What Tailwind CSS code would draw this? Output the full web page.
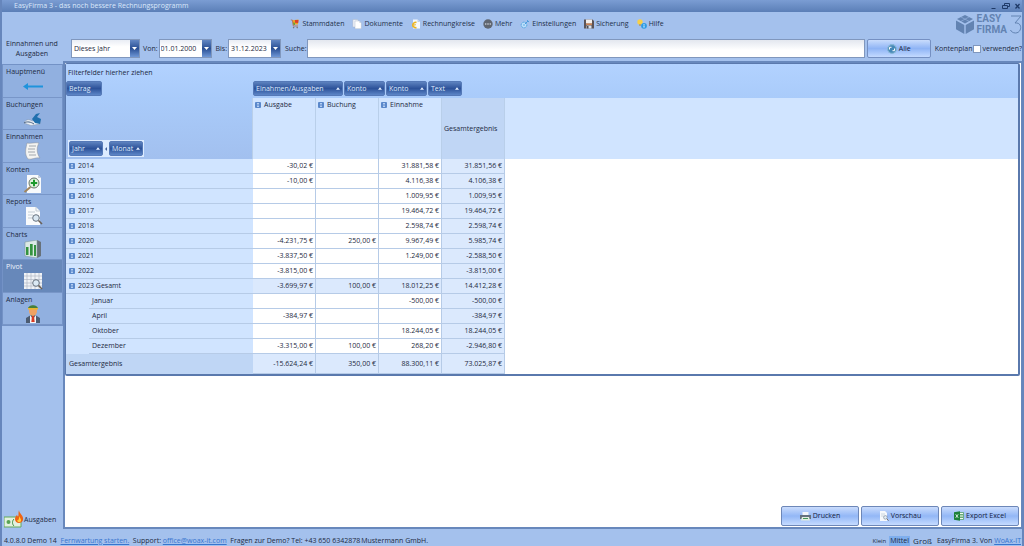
<!DOCTYPE html>
<html lang="de">
<head>
<meta charset="utf-8">
<title>EasyFirma 3 - das noch bessere Rechnungsprogramm</title>
<script src="https://cdn.jsdelivr.net/npm/@tailwindcss/browser@4"></script>
</head>
<body class="flex min-h-screen flex-col overflow-x-hidden border-x-2 border-[#6686bc] bg-[#a4c1ed] font-['Open_Sans','Noto_Sans',sans-serif] text-[7px] leading-[10px] text-[#1d2a42]">
<svg class="hidden">
  <symbol id="exp" viewBox="0 0 6 6"><rect width="6" height="6" rx="1" fill="#5a88cb"/><path d="M2 1.500h2M2 4.500h2M3 1.500v3" stroke="#c5daf8" stroke-width=".8"/></symbol>
  <symbol id="up" viewBox="0 0 5 3"><path d="M0 3 2.500 0 5 3z" fill="#e4efff"/></symbol>
  <symbol id="down" viewBox="0 0 5 3"><path d="M0 0h5L2.500 3z" fill="#fff"/></symbol>
  <symbol id="lens" viewBox="0 0 10 10"><circle cx="4" cy="4" r="3" fill="#dcebf5" fill-opacity=".8" stroke="#77828e"/><path d="m6.300 6.300 3 3" stroke="#6f6558" stroke-width="1.500"/></symbol>
</svg>

<header>
  <div class="flex h-3 items-center justify-between bg-linear-to-b from-[#7b9dd3] to-[#5b7fb7] pl-3 text-[#dbe8fb]">
    <h1 class="-mt-px">EasyFirma 3 - das noch bessere Rechnungsprogramm</h1>
    <div class="flex items-center gap-1 text-[#1f3a68]">
      <button aria-label="Minimieren" class="h-2 w-2"><svg viewBox="0 0 8 8" class="size-2"><path d="M1.500 6.500h4" stroke="currentColor"/></svg></button>
      <button aria-label="Wiederherstellen" class="h-2 w-2"><svg viewBox="0 0 8 8" class="size-2"><path d="M2.500 3V1.500h5v3H6M.5 3.500h5v3h-5z" fill="none" stroke="currentColor"/></svg></button>
      <button aria-label="Schließen" class="h-2 w-2"><svg viewBox="0 0 8 8" class="size-2"><path d="m1.500 2 4 4.500m0-4.500-4 4.500" stroke="currentColor" stroke-width="1.300"/></svg></button>
    </div>
  </div>

  <div class="flex h-6 items-center">
    <nav class="flex flex-1 items-center justify-center gap-2 text-[#22304a] [&_button]:flex [&_button]:items-center [&_button]:gap-[2px] [&_svg]:size-[10px]">
      <button><svg viewBox="0 0 10 10"><path d="M2.500 1.200 8.500.5 8 5.500H3z" fill="#f0a020"/><path d="M5 1h3.500L8.200 4 5 3.800z" fill="#dc4028"/><path d="m3 3.500 2 .3V6H3.500z" fill="#64a83a"/><path d="M.8 1h1.500l1 6H8" fill="none" stroke="#b56038" stroke-width=".7"/><circle cx="3.600" cy="8.600" r=".8" fill="#777"/><circle cx="7.200" cy="8.600" r=".8" fill="#777"/></svg>Stammdaten</button>
      <button><svg viewBox="0 0 10 10"><path d="M.8.5h4.500l1 1V8H.8z" fill="#edf1f7" stroke="#a5afc0" stroke-width=".4"/><path d="M3 2h4.500L9.300 4v5.700H3z" fill="#fff" stroke="#a5afc0" stroke-width=".4"/><path d="M7.500 2v2h1.800z" fill="#c4cedd"/></svg>Dokumente</button>
      <button><svg viewBox="0 0 10 10"><path d="M2 .5h4.500L9 3v6.500H2z" fill="#f6f9fd"/><path d="M6.500.5V3H9z" fill="#c3cfdf"/><path d="M5.500 3.500a2.700 2.700 0 1 0 0 5" fill="none" stroke="#edb51e" stroke-width="1.500"/><path d="M1 5.400h4M1 6.800h3.500" stroke="#edb51e" stroke-width=".7"/></svg>Rechnungkreise</button>
      <button><svg viewBox="0 0 10 10"><circle cx="5" cy="5" r="4.700" fill="#5f6671"/><circle cx="2.700" cy="5" r=".8" fill="#d5dbe4"/><circle cx="5" cy="5" r=".8" fill="#d5dbe4"/><circle cx="7.300" cy="5" r=".8" fill="#d5dbe4"/></svg>Mehr</button>
      <button><svg viewBox="0 0 10 10"><circle cx="4" cy="6" r="2.800" fill="#bfe0fb" stroke="#4aa1df" stroke-width="1" stroke-dasharray="1.200 .5"/><circle cx="4" cy="6" r="1" fill="#7fbcec"/><path d="m5 5 3-3M7 1.200l2 1.800" stroke="#4a9bdb"/></svg>Einstellungen</button>
      <button><svg viewBox="0 0 10 10"><path d="M0 .5h8.500L10 2v7.500H0z" fill="#5b5457"/><path d="M2 .5h6v4H2z" fill="#f3efec"/><path d="M2 4.500h6v1.300H2z" fill="#e58c51"/><path d="M2.500 6.500h5v3h-5z" fill="#dbe1ea"/><path d="M3 7h1.500v2.500H3z" fill="#4c4b51"/></svg>Sicherung</button>
      <button><svg viewBox="0 0 10 10"><circle cx="3" cy="3" r="2.700" fill="#f8cf48"/><path d="M2 5.300h2v1.500H2z" fill="#b49a62"/><circle cx="7" cy="6.800" r="2.900" fill="#2f9be3"/><path d="M7 5v.8M7 6.400v2.200" stroke="#fff" stroke-width=".9"/></svg>Hilfe</button>
    </nav>
    <div class="flex w-[70px] shrink-0 items-center justify-end gap-[3px] text-[#6283b2]">
      <svg viewBox="0 0 18 19" class="h-[19px] w-[18px]"><path d="m9 0 8 4-8 4.500L1 4zM0 5.500l8.300 4.600V19L0 14.300zM18 5.500l-8.300 4.600V19l8.300-4.700z" fill="currentColor"/><path d="m5 2 8 4.300M13 2 5 6.300" stroke="#a4c1ed" stroke-width=".5"/></svg>
      <div class="font-[Roboto] text-[10px] leading-[11px] font-bold"><div>EASY</div><div>FIRMA</div></div>
      <svg viewBox="0 0 12 19" class="h-[19px] w-3"><path d="M1 1h10L5 8c8-1 7 10 .5 10C3 18 1 16.500.5 15" fill="none" stroke="currentColor"/></svg>
    </div>
  </div>

  <div class="flex h-[25px] items-center">
    <div class="w-[60px] text-center">Einnahmen und Ausgaben</div>
    <div class="ml-[9px] flex h-[19px] w-[69px] border border-[#8097bd] bg-white">
      <select aria-label="Zeitraum" class="min-w-0 flex-1 appearance-none bg-linear-to-b from-[#e9edf5] to-white to-40% px-[2px] leading-[17px]"><option>Dieses Jahr</option></select>
      <span class="grid w-[9px] place-items-center bg-linear-to-b from-[#6387c4] via-[#2a4f94] to-[#6f97d6]"><svg class="h-[3px] w-[5px]"><use href="#down"/></svg></span>
    </div>
    <label for="von" class="mr-px ml-[3px]">Von:</label>
    <div class="flex h-[19px] w-[53px] border border-[#8097bd] bg-white">
      <input id="von" value="01.01.2000" class="min-w-0 flex-1 bg-linear-to-b from-[#e9edf5] to-white to-40% px-px">
      <button aria-label="Von wählen" class="grid w-[9px] place-items-center bg-linear-to-b from-[#6387c4] via-[#2a4f94] to-[#6f97d6]"><svg class="h-[3px] w-[5px]"><use href="#down"/></svg></button>
    </div>
    <label for="bis" class="mr-px ml-1">Bis:</label>
    <div class="flex h-[19px] w-[53px] border border-[#8097bd] bg-white">
      <input id="bis" value="31.12.2023" class="min-w-0 flex-1 bg-linear-to-b from-[#e9edf5] to-white to-40% px-[2px]">
      <button aria-label="Bis wählen" class="grid w-[9px] place-items-center bg-linear-to-b from-[#6387c4] via-[#2a4f94] to-[#6f97d6]"><svg class="h-[3px] w-[5px]"><use href="#down"/></svg></button>
    </div>
    <label for="suche" class="ml-1">Suche:</label>
    <input id="suche" class="h-[19px] min-w-0 flex-1 border border-[#8097bd] bg-linear-to-b from-[#e3e7ef] to-white to-60% px-1">
    <button class="ml-[2px] flex h-[19px] w-16 items-center justify-center gap-[2px] rounded-xs border border-[#7590c2] bg-linear-to-b from-[#c9dcfc] via-[#8fb4f5] to-[#c3daff] text-[#14213c]"><svg viewBox="0 0 10 10" class="size-[10px]"><circle cx="5" cy="5" r="4.700" fill="#4688b8"/><path d="M2.500 5.500V3.300h2M7.500 4.500v2.200h-2" fill="none" stroke="#fff"/><circle cx="5" cy="5" r="4.300" fill="none" stroke="#a6cfdf" stroke-width=".7"/></svg>Alle</button>
    <label class="ml-1 flex items-center whitespace-nowrap">Kontenplan<input type="checkbox" class="mr-[2px] size-2 appearance-none border border-[#8097bd] bg-white">verwenden?</label>
  </div>
</header>

<div class="flex flex-1">
  <aside class="flex w-[61px] shrink-0 flex-col justify-between pt-[3px]">
    <nav class="flex h-[262px] flex-col border border-[#7392c6] bg-[#91b0e0] [&_button]:flex [&_button]:flex-1 [&_button]:flex-col [&_button]:border-b [&_button]:border-[#7896c8] [&_button]:pl-[3px] [&_button]:pt-[2px] [&_button]:text-left [&_svg]:h-[18px] [&_svg]:w-5 [&_svg]:shrink-0 [&_svg]:ml-[17px]">
      <button>Hauptmenü<svg viewBox="0 0 20 18"><path d="M0 9.500 5 6v2.500h15v2H5V13z" fill="#1f93dc"/></svg></button>
      <button>Buchungen<svg viewBox="0 0 20 18"><path d="M1 13c2-4 5-4 8-2l8-1v4l-9 1.500z" fill="#e9eff5" stroke="#8594a8" stroke-width=".5"/><path d="m9 9 4-5 4-1-3 4 4 2-1 5-5-1z" fill="#2070ae"/><path d="M1 13c3-2 7-1 10 1" stroke="#465f80" fill="none"/></svg></button>
      <button>Einnahmen<svg viewBox="0 0 20 18"><path d="M4 1c4 1 8-1 12 0-3 5-2 11 1 15-5-1-8 2-12 1-4-5-2-11-1-16z" fill="#f4f4f2" stroke="#888e98" stroke-width=".5"/><path d="M6 4h7M5 7h7M5 10h7M6 13h7" stroke="#8e949d" stroke-width=".8"/></svg></button>
      <button>Konten<svg viewBox="0 0 20 18"><path d="M4 0h11l3 3v15H4z" fill="#f8fafc"/><path d="M15 0v3h3" fill="#c5cdd8"/><circle cx="11" cy="8" r="5" fill="#e1f2dd" stroke="#68756a"/><path d="M11 4.800v6.400M7.800 8h6.400" stroke="#1d9a2c" stroke-width="2"/><path d="m7.500 12-6 5" stroke="#a1855b" stroke-width="2"/></svg></button>
      <button>Reports<svg viewBox="0 0 20 18"><path d="M3 0h10l4 4v14H3z" fill="#f8fafc"/><path d="M13 0v4h4M5 5h7M5 8h5M5 11h4" fill="none" stroke="#aeb7c3" stroke-width=".7"/><circle cx="13" cy="11" r="3.300" fill="#d9e7f2" stroke="#66717e"/><path d="m15.500 13.500 3.500 3.500" stroke="#6a6056" stroke-width="1.600"/></svg></button>
      <button>Charts<svg viewBox="0 0 20 18"><path d="M2 2 14 0v18L2 16z" fill="#dce9e5"/><path d="m14 0 4 2v14l-4 2z" fill="#67717a"/><path d="M3 7h2.500v8H3zM7 4h2.700v11.500H7zM11 5h2v11h-2z" fill="#359340"/><path d="M2 2 14 0v18L2 16z" fill="none" stroke="#809ba0" stroke-width=".6"/></svg></button>
      <button class="bg-[#6788ba] text-[#eef5ff]" aria-current="page">Pivot<svg viewBox="0 0 20 18"><path d="M1 1h18v16H1z" fill="#f0f3f7"/><path d="M1 4h18M1 7.500h18M1 11h18M1 14h18M4 1v16M8 1v16M12 1v16M16 1v16" stroke="#a8b0bd" stroke-width=".6"/><circle cx="13" cy="11" r="3.300" fill="#dbe9f4" stroke="#68737f"/><path d="m15.500 13.500 3.500 3.500" stroke="#6a6056" stroke-width="1.600"/></svg></button>
      <button>Anlagen<svg viewBox="0 0 20 18"><path d="M3 18v-5l5-3h4l5 3v5z" fill="#4c5b71"/><path d="m7 10 3 4 3-4v8H7z" fill="#f3f5f7"/><path d="m9 11h2l.7 6H8.300z" fill="#d83a23"/><ellipse cx="10" cy="6" rx="4" ry="5" fill="#efa263"/><path d="M5 4c0-5 10-5 10 0l-2-1H7z" fill="#46803c"/><path d="M5 3h10v1.500H5z" fill="#e9b72f"/></svg></button>
    </nav>
    <button class="mb-px flex items-end pl-[2px]"><svg viewBox="0 0 20 18" class="h-[18px] w-5"><path d="M0 7h17v10H0z" fill="#e3f1df" stroke="#62a95b"/><circle cx="4.500" cy="12" r="2" fill="#58a354"/><path d="M10 9c-2 2-2 5 0 7" stroke="#388a38" fill="none"/><path d="M15 0c0 4 5 5 4 10-1 4-8 4-8-1 0-2 1-3 2-4l1 2c1-2 0-4 1-7z" fill="#ef6413"/><path d="M15.500 6c0 2 2 3 1.500 5-1 2-4 1-4-1l1 .5c1-1 1-3 1.500-4.500z" fill="#ffd23f"/></svg><span class="pb-[3px]">Ausgaben</span></button>
  </aside>

  <main class="flex min-w-0 flex-1 flex-col border-2 border-r border-[#6888bc] bg-white">
    <section class="mr-px rounded-xs border-2 border-t border-l border-[#5a79ad] bg-[#d0e4ff]">
      <div class="bg-linear-to-b from-[#b2d2ff] to-[#a9cbfa] pt-1">
        <div class="pl-[2px]">Filterfelder hierher ziehen</div>
        <div class="mt-[3px] flex pb-[2px] text-[#dfeafd] [&_button]:flex [&_button]:h-[15px] [&_button]:items-center [&_button]:justify-between [&_button]:rounded-xs [&_button]:border [&_button]:border-[#5579b7] [&_button]:bg-linear-to-b [&_button]:from-[#5d82bf] [&_button]:via-[#2d5299] [&_button]:to-[#5d86c7] [&_button]:px-[2px] [&_svg]:h-[3px] [&_svg]:w-1">
          <div class="w-[187px]"><button class="w-9">Betrag</button></div>
          <div class="flex gap-px">
            <button class="w-[90px]">Einahmen/Ausgaben<svg><use href="#up"/></svg></button>
            <button class="w-[41px]">Konto<svg><use href="#up"/></svg></button>
            <button class="w-[41px]">Konto<svg><use href="#up"/></svg></button>
            <button class="w-[34px]">Text<svg><use href="#up"/></svg></button>
          </div>
        </div>
      </div>
      <table class="w-full table-fixed border-separate border-spacing-0 [&_tbody_td]:border-r [&_tbody_td]:border-b [&_tbody_td]:border-[#b6cbe7] [&_tbody_td]:bg-white [&_tbody_td]:pr-[2px] [&_tbody_td]:text-right [&_tbody_td:nth-child(5)]:bg-[#dbe9fd] [&_tbody_td:nth-child(6)]:border-0 [&_tbody_th]:bg-[#d0e4ff] [&_tbody_th]:p-0 [&_tbody_th]:text-left [&_tbody_th]:font-normal [&_tbody_th>div]:flex [&_tbody_th>div]:h-[15px] [&_tbody_th>div]:items-center [&_tbody_th>div]:gap-[3px] [&_tbody_th>div]:border-b [&_tbody_th>div]:border-[#b6cbe7] [&_tbody_th>div]:pl-[3px] [&_tbody_th_svg]:size-[6px]">
        <colgroup><col class="w-[187px]"><col class="w-[63px]"><col class="w-[63px]"><col class="w-[63px]"><col class="w-[63px]"><col></colgroup>
        <thead>
          <tr class="[&_th]:border-r [&_th]:border-[#b9cfea] [&_th]:px-[2px] [&_th]:text-left [&_th]:font-normal">
            <th class="h-[61px] bg-linear-to-b from-[#a9cbfa] to-[#a2c0ef] pb-[2px] align-bottom">
              <div class="flex w-fit items-center gap-[2px] bg-[#dcebff] p-px text-[#dfeafd] [&_button]:flex [&_button]:h-[15px] [&_button]:items-center [&_button]:justify-between [&_button]:rounded-xs [&_button]:border [&_button]:border-[#5579b7] [&_button]:bg-linear-to-b [&_button]:from-[#5d82bf] [&_button]:via-[#2d5299] [&_button]:to-[#5d86c7] [&_button]:px-[2px]">
                <button class="w-[34px]">Jahr<svg class="h-[3px] w-1"><use href="#up"/></svg></button>
                <svg viewBox="0 0 2 4" class="h-1 w-[2px]"><path d="M2 0v4L0 2z" fill="#42629a"/></svg>
                <button class="w-[34px]">Monat<svg class="h-[3px] w-1"><use href="#up"/></svg></button>
              </div>
            </th>
            <th class="align-top"><div class="flex items-center gap-[3px] pt-[2px]"><svg class="size-[6px]"><use href="#exp"/></svg>Ausgabe</div></th>
            <th class="align-top"><div class="flex items-center gap-[3px] pt-[2px]"><svg class="size-[6px]"><use href="#exp"/></svg>Buchung</div></th>
            <th class="align-top"><div class="flex items-center gap-[3px] pt-[2px]"><svg class="size-[6px]"><use href="#exp"/></svg>Einnahme</div></th>
            <th class="bg-[#c0d6f5]">Gesamtergebnis</th>
            <td></td>
          </tr>
        </thead>
        <tbody>
          <tr><th><div><svg><use href="#exp"/></svg>2014</div></th><td>-30,02 €</td><td></td><td>31.881,58 €</td><td>31.851,56 €</td><td></td></tr>
          <tr><th><div><svg><use href="#exp"/></svg>2015</div></th><td>-10,00 €</td><td></td><td>4.116,38 €</td><td>4.106,38 €</td><td></td></tr>
          <tr><th><div><svg><use href="#exp"/></svg>2016</div></th><td></td><td></td><td>1.009,95 €</td><td>1.009,95 €</td><td></td></tr>
          <tr><th><div><svg><use href="#exp"/></svg>2017</div></th><td></td><td></td><td>19.464,72 €</td><td>19.464,72 €</td><td></td></tr>
          <tr><th><div><svg><use href="#exp"/></svg>2018</div></th><td></td><td></td><td>2.598,74 €</td><td>2.598,74 €</td><td></td></tr>
          <tr><th><div><svg><use href="#exp"/></svg>2020</div></th><td>-4.231,75 €</td><td>250,00 €</td><td>9.967,49 €</td><td>5.985,74 €</td><td></td></tr>
          <tr><th><div><svg><use href="#exp"/></svg>2021</div></th><td>-3.837,50 €</td><td></td><td>1.249,00 €</td><td>-2.588,50 €</td><td></td></tr>
          <tr><th><div><svg><use href="#exp"/></svg>2022</div></th><td>-3.815,00 €</td><td></td><td></td><td>-3.815,00 €</td><td></td></tr>
          <tr class="[&_td:not(:last-child)]:bg-[#dbe9fd]!"><th><div><svg><use href="#exp"/></svg>2023 Gesamt</div></th><td>-3.699,97 €</td><td>100,00 €</td><td>18.012,25 €</td><td>14.412,28 €</td><td></td></tr>
          <tr><th><div class="ml-[23px]">Januar</div></th><td></td><td></td><td>-500,00 €</td><td>-500,00 €</td><td></td></tr>
          <tr><th><div class="ml-[23px]">April</div></th><td>-384,97 €</td><td></td><td></td><td>-384,97 €</td><td></td></tr>
          <tr><th><div class="ml-[23px]">Oktober</div></th><td></td><td></td><td>18.244,05 €</td><td>18.244,05 €</td><td></td></tr>
          <tr><th><div class="ml-[23px]">Dezember</div></th><td>-3.315,00 €</td><td>100,00 €</td><td>268,20 €</td><td>-2.946,80 €</td><td></td></tr>
          <tr class="h-5 [&_td:not(:last-child)]:bg-[#dbe9fd]!"><th class="bg-[#bfd6f5]! pl-[3px]!">Gesamtergebnis</th><td>-15.624,24 €</td><td>350,00 €</td><td>88.300,11 €</td><td>73.025,87 €</td><td></td></tr>
        </tbody>
      </table>
    </section>

    <div class="mt-auto flex justify-end gap-[2px] pr-[2px] pb-px text-[#14213c] [&_button]:flex [&_button]:h-5 [&_button]:w-[78px] [&_button]:items-center [&_button]:justify-center [&_button]:gap-[2px] [&_button]:rounded-xs [&_button]:border [&_button]:border-[#6d87b8] [&_button]:bg-linear-to-b [&_button]:from-[#cadcfc] [&_button]:via-[#93b7f6] [&_button]:to-[#c5dbff]">
      <button><svg viewBox="0 0 11 10" class="h-[10px] w-[11px]"><path d="M2.500 1h6v4h-6z" fill="#f3f6fa"/><path d="M0 4h11v4H0z" fill="#65717f"/><path d="M2 6h7l1 3.500H1z" fill="#e2eee0"/><path d="M3 7.500h5" stroke="#47965c"/></svg>Drucken</button>
      <button><svg viewBox="0 0 10 10" class="size-[10px]"><path d="M1 0h5l2 2v8H1z" fill="#f6f9fc"/><path d="M2 3h4M2 5h3" stroke="#b4bfcd" stroke-width=".6"/><use href="#lens" x="4" y="4" width="6" height="6"/></svg>Vorschau</button>
      <button><svg viewBox="0 0 10 10" class="size-[10px]"><path d="M5 1.500h4.500v7H5z" fill="#f2faf1" stroke="#2d8a43" stroke-width=".6"/><path d="M6 3.500h3M6 5h3M6 6.500h3" stroke="#2d8a43" stroke-width=".7"/><path d="m0 1.300 6-1v9.400l-6-1z" fill="#1e8139"/><path d="m1.700 3.300 2.500 3.500m0-3.500L1.700 6.800" stroke="#fff" stroke-width=".8"/></svg>Export Excel</button>
    </div>
  </main>
</div>

<footer class="flex h-[17px] items-center justify-between pt-[6px] pr-px pl-[2px] whitespace-nowrap">
  <div class="flex"><span>4.0.8.0 Demo 14&nbsp; <a href="#" class="text-[#3775cf] underline">Fernwartung starten.</a>&nbsp; Support: <a href="#" class="text-[#3775cf] underline">office@woax-it.com</a>&nbsp; Fragen zur Demo? Tel: +43 650 6342878</span><span class="ml-px">Mustermann GmbH.</span></div>
  <div class="flex items-center gap-[3px]"><button class="text-[6px]">Klein</button><button class="bg-[#7eaeed] px-px">Mittel</button><button class="text-[8px]">Groß</button><span class="ml-[2px]">EasyFirma 3. Von <a href="#" class="text-[#3775cf] underline">WoAx-IT</a></span></div>
</footer>
</body>
</html>
